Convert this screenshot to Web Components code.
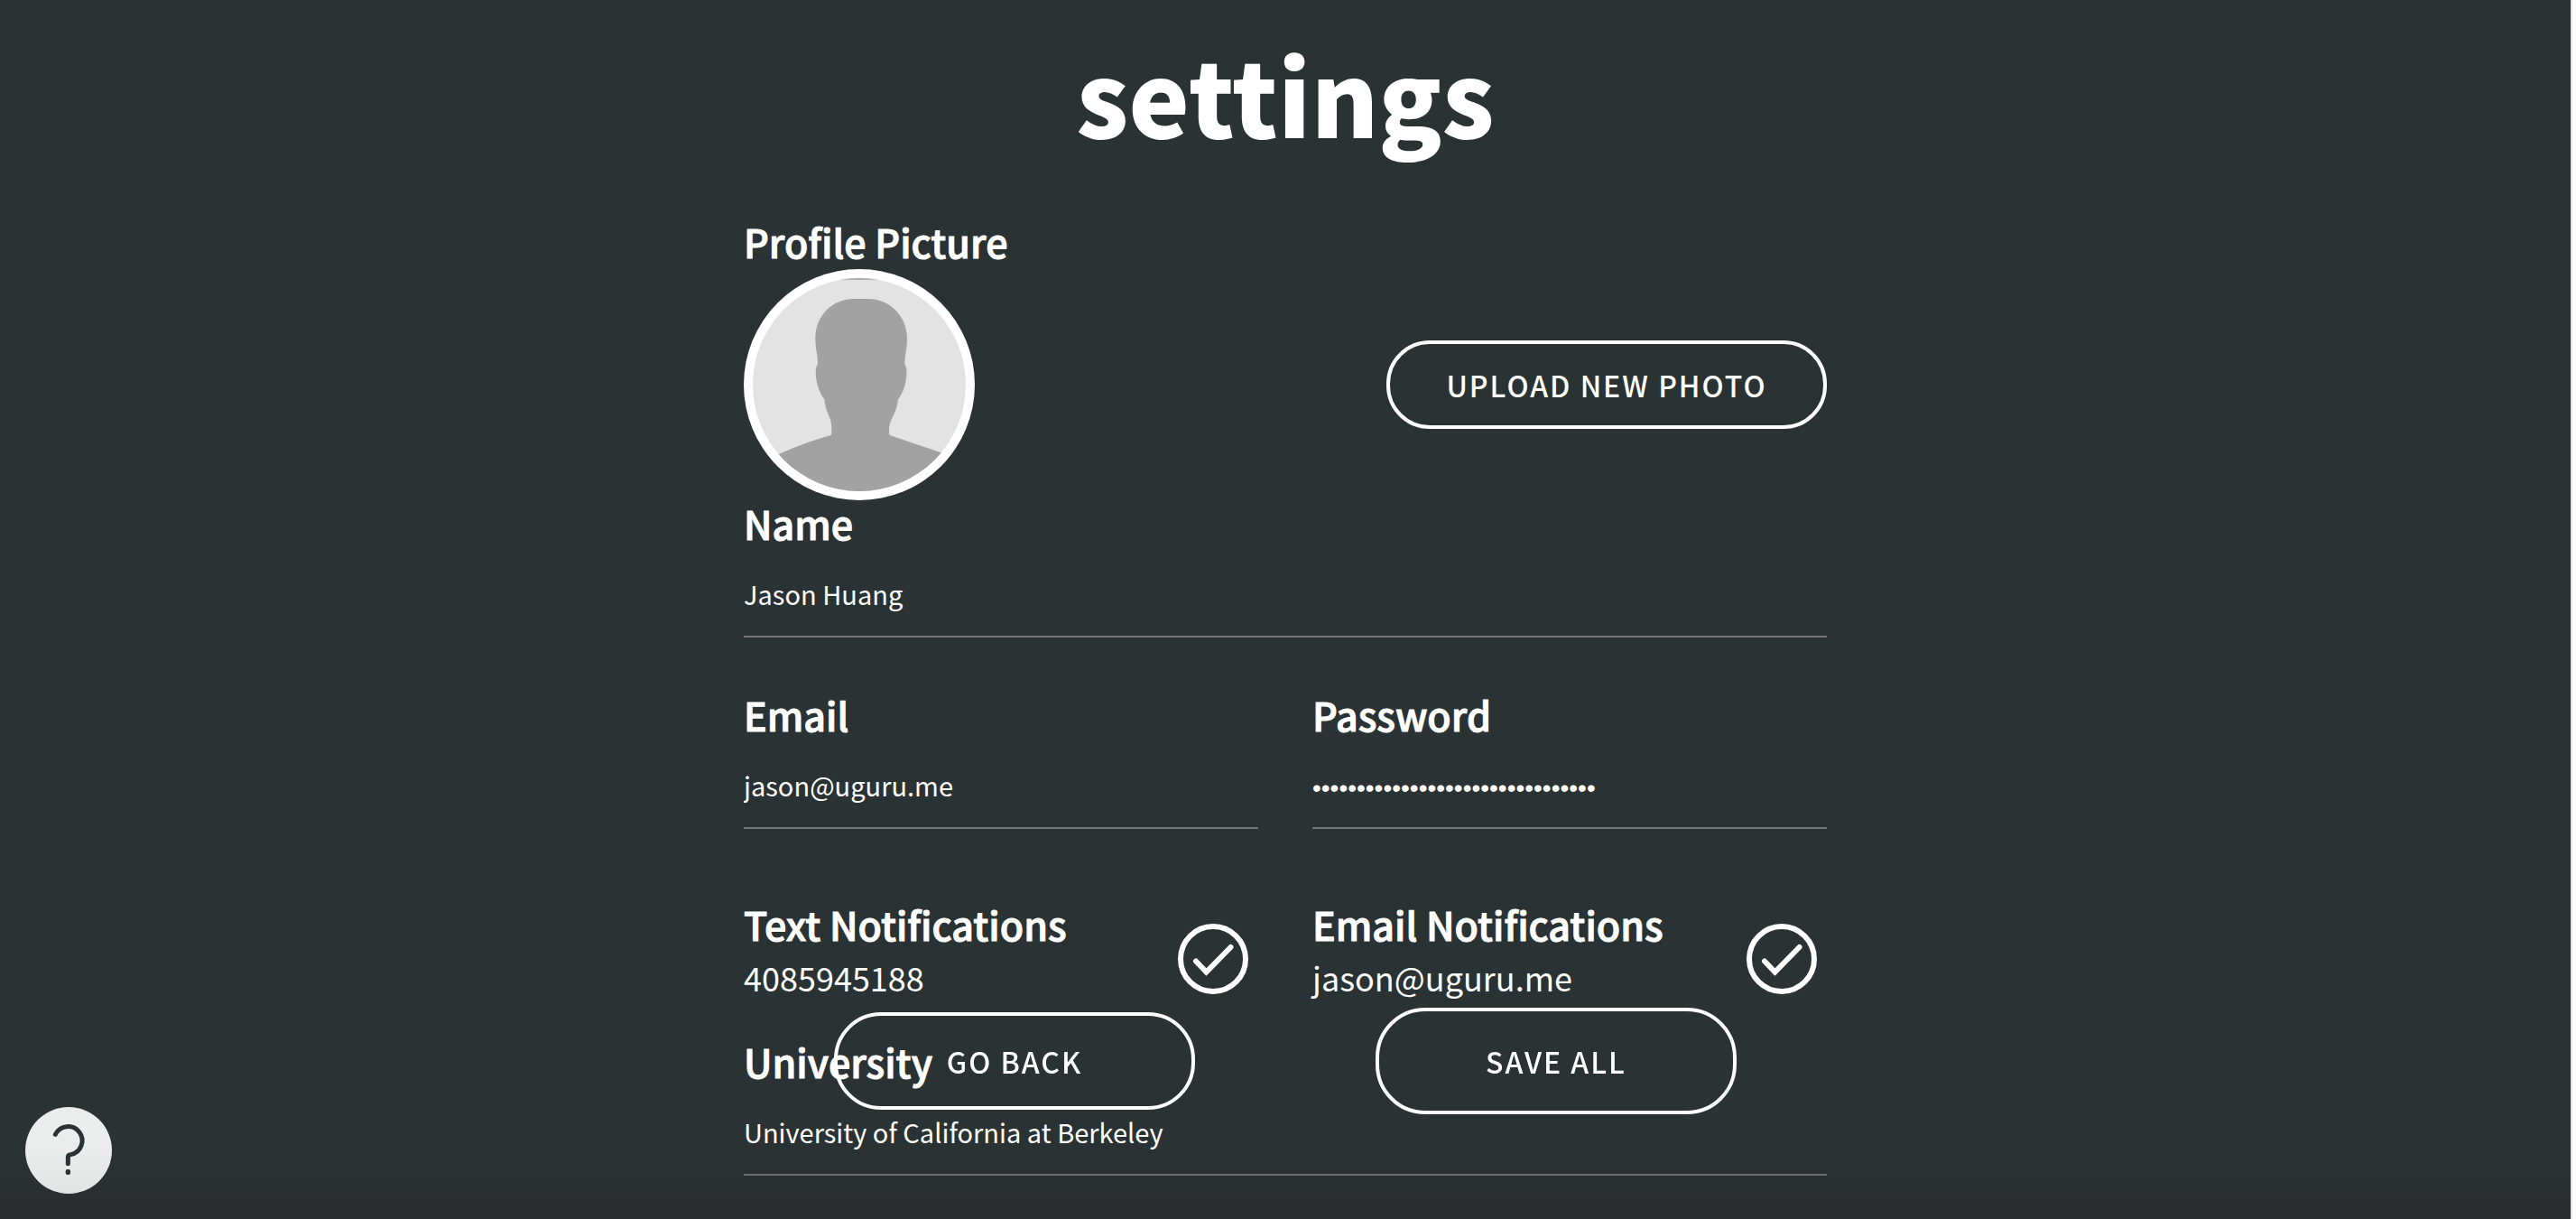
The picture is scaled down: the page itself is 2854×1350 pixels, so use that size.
<!DOCTYPE html>
<html lang="en">
<head>
<meta charset="utf-8">
<meta name="viewport" content="width=device-width, initial-scale=1">
<title>Settings</title>
<style>
  html, body { height: 100%; }
  body {
    margin: 0;
    overflow: hidden;
    background: #2b3234;
    color: #fff;
    font-family: "Noto Sans CJK SC", "Noto Sans", sans-serif;
  }
</style>
</head>
<body>
<settings-page></settings-page>
<script>
class BaseElement extends HTMLElement {
  connectedCallback() {
    if (this.shadowRoot) return;
    this.attachShadow({ mode: "open" }).innerHTML = this.render();
  }
  attr(name, fallback = "") { return this.getAttribute(name) || fallback; }
}

class SectionTitle extends BaseElement {
  render() {
    return `<style>
      :host { display: block; }
      h2 { margin: 0 0 6px; font-size: 43px; line-height: 50px; font-weight: 500; -webkit-text-stroke: 1px currentColor; }
    </style><h2><slot></slot></h2>`;
  }
}
customElements.define("section-title", SectionTitle);

class TextField extends BaseElement {
  render() {
    return `<style>
      :host { display: block; flex: 1; min-width: 0; }
      label { display: block; margin-bottom: 6px; font-size: 43px; line-height: 50px; font-weight: 500; -webkit-text-stroke: 1px currentColor; }
      input {
        display: block; box-sizing: border-box; width: 100%; height: 96px;
        margin: 0; padding: 0; border: 0; border-bottom: 2px solid #757575; border-radius: 0;
        background: transparent; color: inherit; outline: 0;
        font-family: inherit; font-size: 29px; font-weight: 400;
      }
      input[type="password"] { padding-top: 8px; font-family: "Liberation Sans", sans-serif; font-size: 28px; }
    </style>
    <label for="field">${this.attr("label")}</label>
    <input id="field" type="${this.attr("type", "text")}" value="${this.attr("value")}" autocomplete="off" spellcheck="false">`;
  }
}
customElements.define("text-field", TextField);

class PillButton extends BaseElement {
  render() {
    return `<style>
      :host { display: block; }
      button {
        display: block; box-sizing: border-box; width: 100%;
        padding: var(--pill-pad, 25px) 0; margin: 0;
        border: 4px solid #fff; border-radius: var(--pill-radius, 48px);
        background: transparent; color: #fff; cursor: pointer;
        font-family: inherit; font-size: 32px; line-height: 40px; font-weight: 500;
        letter-spacing: 2px; text-transform: uppercase; white-space: nowrap;
      }
    </style><button type="button"><slot></slot></button>`;
  }
}
customElements.define("pill-button", PillButton);

class UserAvatar extends BaseElement {
  render() {
    return `<style>
      :host { display: block; flex: none; box-sizing: border-box; width: 256px; height: 256px; }
      svg { display: block; width: 100%; height: 100%; }
    </style>
    <svg viewBox="72 234 768 768" role="img" aria-label="Profile picture">
      <defs><clipPath id="disc"><circle cx="456" cy="618" r="354"/></clipPath></defs>
      <circle cx="456" cy="618" r="384" fill="#fff"/>
      <g clip-path="url(#disc)">
        <rect x="72" y="234" width="768" height="768" fill="#e3e3e3"/>
        <path fill="#a2a2a2" d="M72 234H840V269H72Z"/>
        <path fill="#a2a2a2" d="M310 470C308 387 369 333 437 333H487C557 333 617 391 615 468C614 500 607 525 607 550C613 560 614 570 613 586C611 618 602 645 585 667C579 720 557 729 555 768V780Q555 785 560 787L728 844L840 900V1002H72V900L190 848C250 822 305 802 359 787Q364 785 364 780V765C363 745 362 735 355 722C347 702 341 685 340 667C322 642 312 610 311 575C311 562 315 555 318 548C318 520 311 500 310 470Z"/>
      </g>
    </svg>`;
  }
}
customElements.define("user-avatar", UserAvatar);

class NotifyToggle extends BaseElement {
  render() {
    return `<style>
      :host { display: block; flex: 1; min-width: 0; }
      label { display: flex; align-items: flex-end; justify-content: space-between; cursor: pointer; }
      .text { display: flex; flex-direction: column; gap: 6px; }
      .name { font-size: 43px; line-height: 50px; font-weight: 500; -webkit-text-stroke: 1px currentColor; }
      .value { font-size: 36px; line-height: 56px; font-weight: 400; }
      .check { display: grid; width: 78px; height: 78px; margin: 0 11px 9px 0; }
      input, svg { grid-area: 1 / 1; width: 78px; height: 78px; box-sizing: border-box; margin: 0; }
      input { appearance: none; border: 6px solid #fff; border-radius: 50%; }
      svg { fill: none; stroke: #fff; stroke-width: 6; stroke-linecap: round; stroke-linejoin: miter; pointer-events: none; visibility: hidden; }
      input:checked + svg { visibility: visible; }
    </style>
    <label>
      <span class="text"><span class="name">${this.attr("label")}</span><span class="value">${this.attr("value")}</span></span>
      <span class="check">
        <input type="checkbox" checked>
        <svg viewBox="0 0 78 78" aria-hidden="true"><path d="M20 41.5L31.5 53.5L58.5 26"/></svg>
      </span>
    </label>`;
  }
}
customElements.define("notify-toggle", NotifyToggle);

class HelpButton extends BaseElement {
  render() {
    return `<style>
      :host { display: block; position: fixed; left: 28px; bottom: 28px; }
      button { display: block; width: 96px; height: 96px; padding: 0; border: 0; border-radius: 50%;
        background: linear-gradient(#ebedec 50%, #e2e4e3); cursor: pointer; }
      svg { display: block; width: 96px; height: 96px; fill: none; stroke: #2b3234; stroke-width: 15; stroke-linecap: round; }
      rect { fill: #2b3234; stroke: none; }
    </style>
    <button type="button" aria-label="Help">
      <svg viewBox="84 78 288 288" aria-hidden="true">
        <path d="M184 169A47 47 0 1 1 235 236Q226 237 226 243V266"/>
        <rect x="218" y="285" width="16" height="18" rx="6"/>
      </svg>
    </button>`;
  }
}
customElements.define("help-button", HelpButton);

class ActionBar extends BaseElement {
  render() {
    return `<style>
      :host { position: fixed; left: 0; right: 6px; bottom: 116px; display: flex; justify-content: center; pointer-events: none; }
      .bar { display: flex; align-items: center; justify-content: space-around; width: 100%; max-width: 1200px; }
      ::slotted(*) { width: 400px; pointer-events: auto; }
    </style><div class="bar"><slot></slot></div>`;
  }
}
customElements.define("action-bar", ActionBar);

class SettingsPage extends BaseElement {
  render() {
    return `<style>
      :host { display: flex; min-height: 100vh; }
      main { flex: 1; min-width: 0; padding-top: 40px; }
      .column { max-width: 1200px; margin: 0 auto; }
      h1 { margin: 0 0 74px; font-size: 114px; line-height: 128px; font-weight: 900; text-align: center; }
      .photo, .pair { display: flex; }
      .photo { align-items: center; justify-content: space-between; }
      .photo pill-button { width: 488px; }
      .pair { gap: 60px; }
      .fields { margin-top: 60px; }
      .toggles { margin: 80px 0 40px; }
      .back { --pill-pad: 30px; --pill-radius: 52px; }
      .save { --pill-pad: 35px; --pill-radius: 55px; }
      .shade { position: fixed; left: 0; right: 6px; bottom: 0; height: 60px; pointer-events: none;
        background: linear-gradient(rgba(40, 34, 38, 0), rgba(40, 34, 38, .4)); }
      .edge { width: 4px; border-left: 2px solid #e5e1e0; background: #fdfdfd; }
    </style>
    <main>
      <div class="column">
        <h1>settings</h1>
        <section-title>Profile Picture</section-title>
        <div class="photo">
          <user-avatar></user-avatar>
          <pill-button>Upload new photo</pill-button>
        </div>
        <text-field label="Name" value="Jason Huang"></text-field>
        <div class="pair fields">
          <text-field label="Email" type="email" value="jason@uguru.me"></text-field>
          <text-field label="Password" type="password" value="${"x".repeat(32)}"></text-field>
        </div>
        <div class="pair toggles">
          <notify-toggle label="Text Notifications" value="4085945188"></notify-toggle>
          <notify-toggle label="Email Notifications" value="jason@uguru.me"></notify-toggle>
        </div>
        <text-field label="University" value="University of California at Berkeley"></text-field>
      </div>
    </main>
    <div class="edge"></div>
    <action-bar>
      <pill-button class="back">Go back</pill-button>
      <pill-button class="save">Save all</pill-button>
    </action-bar>
    <div class="shade"></div>
    <help-button></help-button>`;
  }
}
customElements.define("settings-page", SettingsPage);
</script>
</body>
</html>
